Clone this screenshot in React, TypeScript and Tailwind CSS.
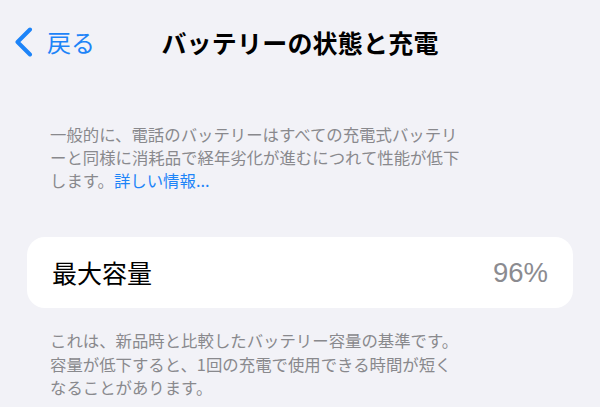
const jp = "font-['Noto_Sans_CJK_JP',sans-serif]";

function BackChevron() {
  return (
    <svg width="20" height="30" viewBox="0 0 20 30" fill="none" aria-hidden>
      <path
        d="M16 2.5 L3.5 15 L16 27.5"
        stroke="#1d84f8"
        strokeWidth="4"
        strokeLinecap="round"
        strokeLinejoin="round"
      />
    </svg>
  );
}

export default function App() {
  return (
    <div className={`h-[407px] w-full overflow-hidden bg-[#f2f2f7] ${jp}`}>
      <header className="grid h-[84px] grid-cols-[1fr_auto_1fr] items-center">
        <button className="flex items-center gap-[13px] pl-[14px] text-[#1d84f8]">
          <BackChevron />
          <span className="text-[24px] leading-none">戻る</span>
        </button>
        <h1 className="text-[25px] font-bold leading-none tracking-[0.2px] text-black">
          バッテリーの状態と充電
        </h1>
        <div />
      </header>

      <p className="mt-[39px] pl-[50px] text-[16.4px] leading-[23px] text-[#89898d]">
        <span className="block whitespace-nowrap">一般的に、電話のバッテリーはすべての充電式バッテリ</span>
        <span className="block whitespace-nowrap">ーと同様に消耗品で経年劣化が進むにつれて性能が低下</span>
        <span className="block whitespace-nowrap">
          します。<a className="text-[#1d84f8]">詳しい情報...</a>
        </span>
      </p>

      <section className="mx-[27px] mt-[45px] flex h-[71px] items-center justify-between rounded-[18px] bg-white px-[25px]">
        <span className="text-[25px] leading-none text-black">最大容量</span>
        <span className="font-['Liberation_Sans',sans-serif] text-[27.5px] leading-none text-[#8b8b90]">
          96%
        </span>
      </section>

      <p className="mt-[21px] pl-[50px] text-[16.4px] leading-[23.5px] text-[#89898d]">
        <span className="block whitespace-nowrap">これは、新品時と比較したバッテリー容量の基準です。</span>
        <span className="block whitespace-nowrap">容量が低下すると、1回の充電で使用できる時間が短く</span>
        <span className="block whitespace-nowrap">なることがあります。</span>
      </p>
    </div>
  );
}
